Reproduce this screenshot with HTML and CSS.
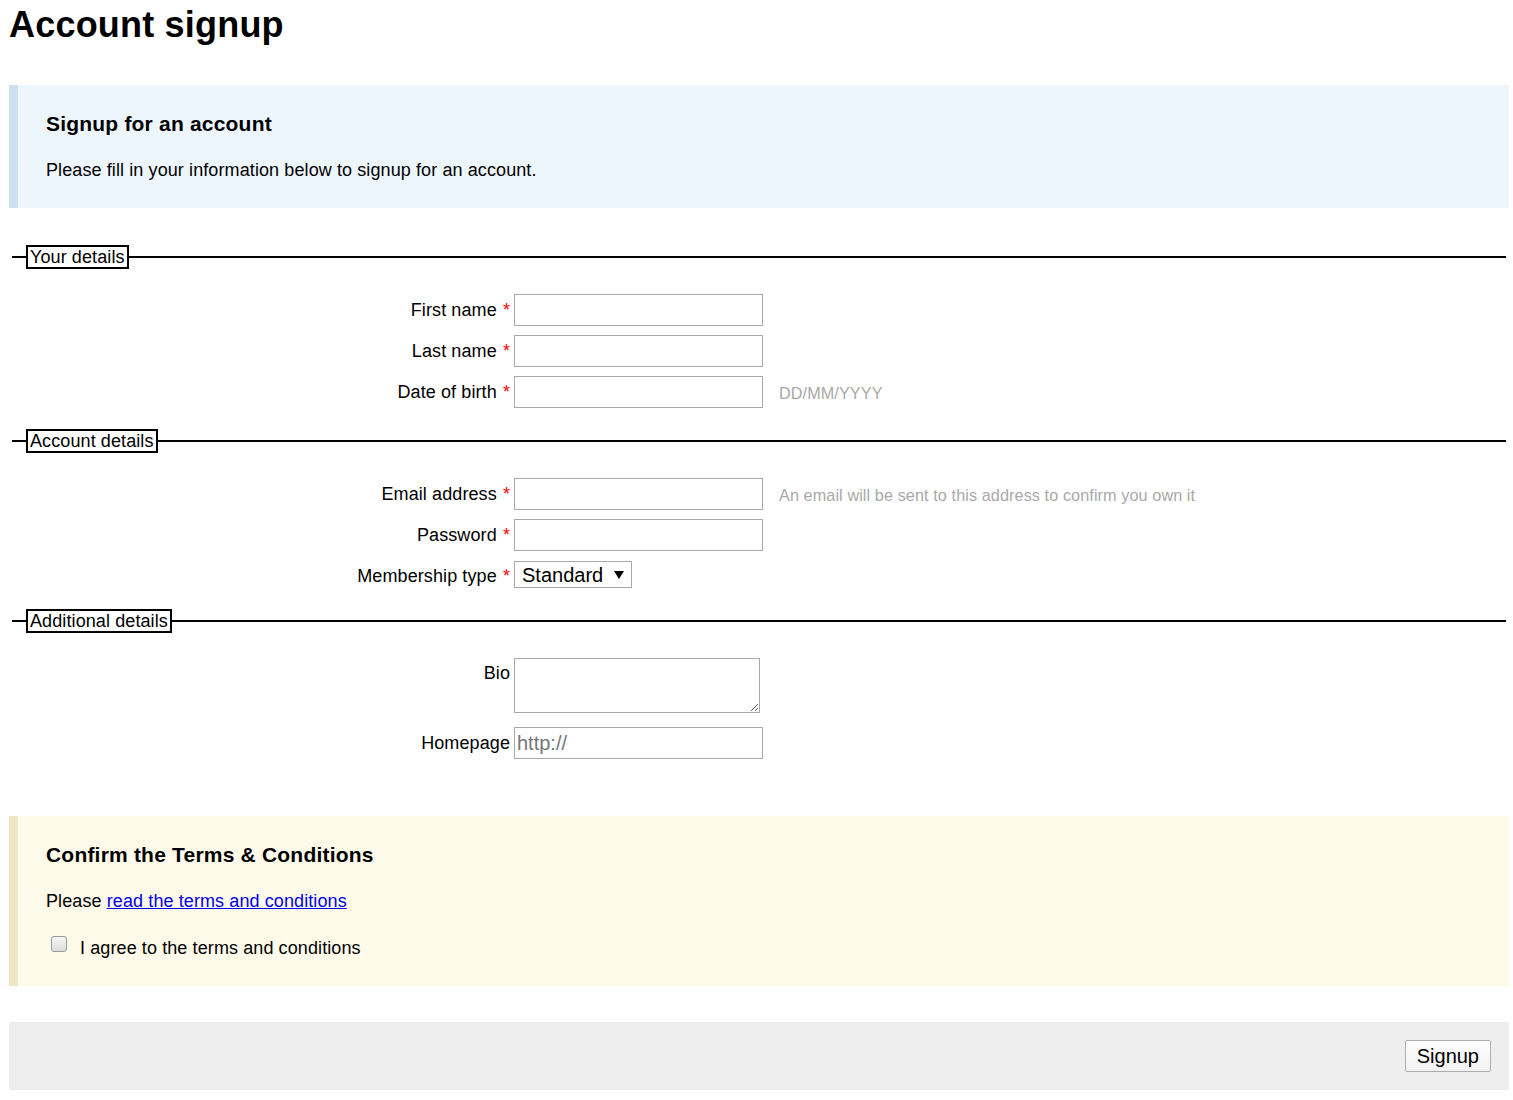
FILE: index.html
```html
<!DOCTYPE html>
<html lang="en">
<head>
<meta charset="utf-8">
<title>Account signup</title>
<link rel="stylesheet" href="styles.css">
</head>
<body>
<div class="page">
  <h1 class="title">Account signup</h1>

  <div class="notice notice-info">
    <h3 class="notice-title">Signup for an account</h3>
    <p class="notice-text">Please fill in your information below to signup for an account.</p>
  </div>

  <form class="form">
    <fieldset class="group group-first">
      <legend class="group-legend">Your details</legend>
      <div class="rows">
        <div class="row">
          <label class="row-label">First name <span class="req">*</span></label>
          <input class="field" type="text">
        </div>
        <div class="row">
          <label class="row-label">Last name <span class="req">*</span></label>
          <input class="field" type="text">
        </div>
        <div class="row">
          <label class="row-label">Date of birth <span class="req">*</span></label>
          <input class="field" type="text">
          <span class="hint">DD/MM/YYYY</span>
        </div>
      </div>
    </fieldset>

    <fieldset class="group">
      <legend class="group-legend">Account details</legend>
      <div class="rows">
        <div class="row">
          <label class="row-label">Email address <span class="req">*</span></label>
          <input class="field" type="text">
          <span class="hint">An email will be sent to this address to confirm you own it</span>
        </div>
        <div class="row">
          <label class="row-label">Password <span class="req">*</span></label>
          <input class="field" type="password">
        </div>
        <div class="row">
          <label class="row-label row-label-low">Membership type <span class="req">*</span></label>
          <span class="select-wrap">
            <select class="select">
              <option>Standard</option>
              <option>Premium</option>
            </select>
            <svg class="select-arrow" width="10" height="8" viewBox="0 0 10 8"><polygon points="0,0 10,0 5,8" fill="#000"/></svg>
          </span>
        </div>
      </div>
    </fieldset>

    <fieldset class="group">
      <legend class="group-legend">Additional details</legend>
      <div class="rows">
        <div class="row row-top row-bio">
          <label class="row-label row-label-top">Bio</label>
          <textarea class="area"></textarea>
        </div>
        <div class="row">
          <label class="row-label">Homepage</label>
          <input class="field" type="text" placeholder="http://">
        </div>
      </div>
    </fieldset>
  </form>

  <div class="notice notice-warn">
    <h3 class="notice-title">Confirm the Terms &amp; Conditions</h3>
    <p class="notice-text">Please <a class="link" href="#">read the terms and conditions</a></p>
    <label class="agree"><input class="check" type="checkbox"><span>I agree to the terms and conditions</span></label>
  </div>

  <div class="actions">
    <button class="button" type="button">Signup</button>
  </div>
</div>
</body>
</html>
```

FILE: styles.css
```css
html, body {
  margin: 0;
  padding: 0;
  background: #fff;
}

body {
  font-family: "Liberation Sans", Arial, sans-serif;
  font-size: 18px;
  letter-spacing: 0.1px;
  color: #000;
}

.page {
  padding: 0 4px 10px 9px;
}

.title {
  margin: 5px 0 40px;
  font-size: 36px;
  line-height: 40px;
  font-weight: bold;
  letter-spacing: 0.2px;
}

.notice {
  border-left: 9px solid #cde0ee;
  background: #eef6fd;
  padding: 27px 27px 27px 28px;
}

.notice-warn {
  margin-top: 36px;
  border-left-color: #f0e7c2;
  background: #fefaea;
}

.notice-title {
  margin: 0;
  font-size: 21px;
  line-height: 24px;
  font-weight: bold;
  letter-spacing: 0.2px;
}

.notice-text {
  margin: 24px 0 0;
  line-height: 21px;
}

.link {
  color: #0000ee;
  text-decoration: underline;
}

.agree {
  display: flex;
  align-items: flex-start;
  margin-top: 26px;
  line-height: 21px;
}

.check {
  -webkit-appearance: none;
  appearance: none;
  box-sizing: border-box;
  width: 16px;
  height: 16px;
  margin: -2px 13px 0 5px;
  border: 1px solid #9a9a9a;
  border-radius: 3px;
  background: linear-gradient(#f6f6f6, #dcdcdc);
  flex: 0 0 auto;
}

.form {
  margin: 0;
}

.group {
  margin: 0 3px;
  border: 0;
  border-top: 2px solid #000;
  padding: 25px 0 21px 14px;
  min-width: 0;
}

.group-first {
  margin-top: 37px;
}

.group-legend {
  border: 2px solid #000;
  padding: 0 2px;
  font-size: 18px;
  line-height: 20px;
}

.rows {
  display: grid;
  row-gap: 9px;
}

.row {
  display: flex;
  align-items: center;
}

.row-top {
  align-items: flex-start;
}

.row-bio {
  margin-bottom: 5px;
}

.row-label {
  flex: 0 0 484px;
  margin-right: 4px;
  text-align: right;
  line-height: 21px;
}

.row-label-low {
  margin-top: 4px;
}

.row-label-top {
  padding-top: 5px;
}

.req {
  color: #f00;
  margin-left: 1px;
}

.field {
  box-sizing: border-box;
  width: 249px;
  height: 32px;
  margin: 0;
  padding: 0 2px;
  border: 1px solid #a9a9a9;
  border-radius: 0;
  font-family: "Liberation Sans", Arial, sans-serif;
  font-size: 20px;
  color: #000;
  background: #fff;
  outline: none;
}

.field::placeholder {
  color: #757575;
}

.area {
  box-sizing: border-box;
  width: 246px;
  height: 55px;
  margin: 0;
  padding: 2px;
  border: 1px solid #a9a9a9;
  font-family: "Liberation Sans", Arial, sans-serif;
  font-size: 18px;
  background: #fff;
}

.hint {
  margin-left: 16px;
  padding-top: 2px;
  font-size: 16.2px;
  color: #a9a9a9;
}

.select-wrap {
  position: relative;
  display: inline-block;
  margin-top: 1px;
}

.select {
  -webkit-appearance: none;
  appearance: none;
  box-sizing: border-box;
  width: 118px;
  height: 27px;
  margin: 0;
  padding: 0 20px 0 7px;
  border: 1px solid #a9a9a9;
  border-radius: 0;
  background: #fff;
  font-family: "Liberation Sans", Arial, sans-serif;
  font-size: 20px;
  color: #000;
  display: block;
}

.select-arrow {
  position: absolute;
  right: 8px;
  top: 10px;
  pointer-events: none;
}

.actions {
  margin-top: 36px;
  background: #eeeeee;
  padding: 18px;
  display: flex;
  justify-content: flex-end;
}

.button {
  box-sizing: border-box;
  height: 32px;
  padding: 0 11px;
  margin: 0;
  border: 1px solid #adadad;
  border-radius: 2px;
  background: linear-gradient(#ffffff, #f1f1f1);
  font-family: "Liberation Sans", Arial, sans-serif;
  font-size: 20px;
  color: #000;
}
```
